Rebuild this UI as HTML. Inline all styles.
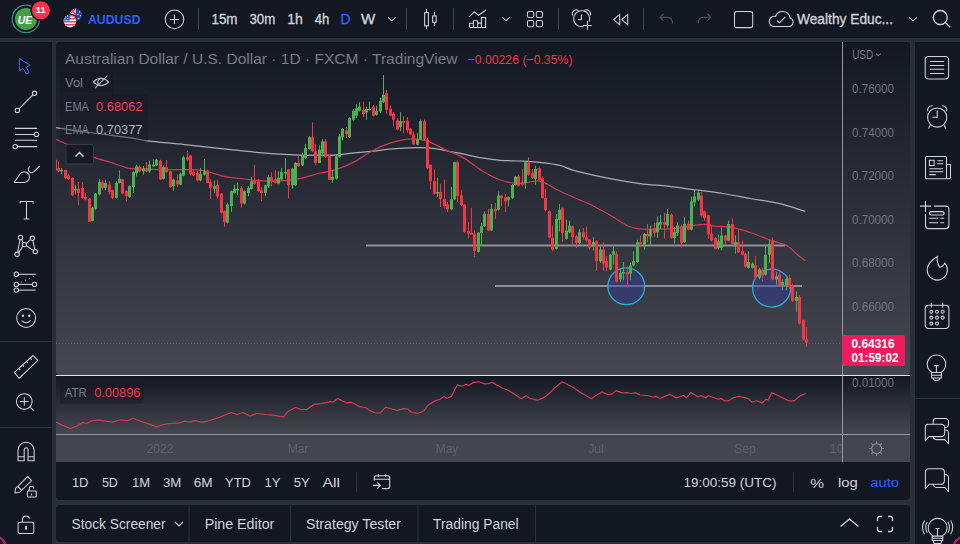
<!DOCTYPE html>
<html><head><meta charset="utf-8"><style>
html,body{margin:0;padding:0;background:#2a2e39;width:960px;height:544px;overflow:hidden}
svg{display:block}
</style></head><body>
<svg width="960" height="544" viewBox="0 0 960 544">
<rect x="0" y="0" width="960" height="544" fill="#2a2e39"/>
<rect x="0" y="0" width="960" height="38" fill="#131722"/>
<rect x="0" y="42" width="52" height="502" fill="#131722"/>
<rect x="915" y="42" width="45" height="502" fill="#131722"/>
<defs>
<linearGradient id="gMain" x1="0" y1="0" x2="0" y2="1"><stop offset="0" stop-color="#131722"/><stop offset="1" stop-color="#454850"/></linearGradient>
<linearGradient id="gAtr" x1="0" y1="0" x2="0" y2="1"><stop offset="0" stop-color="#131722"/><stop offset="1" stop-color="#454850"/></linearGradient>
<clipPath id="cMain"><rect x="56" y="42" width="786" height="333"/></clipPath>
<clipPath id="cAtr"><rect x="56" y="376" width="786" height="58"/></clipPath>
</defs>
<rect x="56" y="42" width="854" height="458" rx="4" fill="#131722"/>
<rect x="56" y="42" width="854" height="333" rx="4" fill="url(#gMain)"/>
<rect x="56" y="50" width="854" height="325" fill="url(#gMain)" opacity="0"/>
<rect x="56" y="376" width="854" height="58" fill="url(#gAtr)"/>
<rect x="56" y="435" width="854" height="27" fill="#43464f"/>
<rect x="56" y="505" width="854" height="37" rx="4" fill="#131722"/>
<g clip-path="url(#cMain)">
<line x1="366" y1="245.5" x2="785" y2="245.5" stroke="#8f929b" stroke-width="1.8"/>
<line x1="495" y1="286" x2="802" y2="286" stroke="#8f929b" stroke-width="1.8"/>
<path d="M56.0 127.5 C62.1 128.4 80.5 131.3 92.8 133.0 C105.0 134.7 120.3 136.3 129.5 137.6 C138.7 138.9 138.7 139.7 147.9 140.9 C157.1 142.1 171.7 143.2 184.7 144.6 C197.7 146.0 213.0 147.8 226.0 149.2 C239.0 150.6 250.6 151.9 262.8 152.9 C275.1 153.9 290.3 154.7 299.5 155.1 C308.7 155.5 311.8 155.1 317.9 155.1 C324.0 155.1 330.2 155.2 336.3 154.8 C342.4 154.4 348.6 153.5 354.7 152.9 C360.8 152.3 366.1 151.8 373.0 151.1 C379.9 150.4 387.0 149.2 396.0 148.7 C405.0 148.1 418.6 147.5 426.8 147.8 C435.0 148.1 439.0 149.4 445.1 150.5 C451.2 151.6 457.4 153.0 463.5 154.2 C469.6 155.4 475.8 156.9 481.9 157.9 C488.0 158.9 494.2 159.8 500.3 160.3 C506.4 160.8 512.6 160.7 518.7 161.0 C524.8 161.3 530.1 161.4 537.0 162.1 C543.9 162.8 553.9 163.9 560.0 165.3 C566.1 166.7 565.1 168.1 573.5 170.3 C581.9 172.5 599.1 176.4 610.2 178.6 C621.3 180.8 630.4 182.3 640.0 183.6 C649.6 184.9 658.4 185.2 667.6 186.2 C676.8 187.2 685.9 188.6 695.1 189.8 C704.3 191.0 713.5 192.1 722.7 193.5 C731.9 194.9 741.1 196.9 750.3 198.5 C759.5 200.1 768.6 200.9 777.8 203.1 C787.0 205.2 800.8 210.0 805.4 211.4" fill="none" stroke="#a9acb5" stroke-width="1.25"/>
<path d="M56.0 139.4 C59.1 140.8 68.3 144.8 74.4 147.7 C80.5 150.6 86.7 154.4 92.8 156.9 C98.9 159.4 105.0 160.5 111.1 162.4 C117.2 164.3 123.4 167.3 129.5 168.4 C135.6 169.5 141.8 169.0 147.9 169.2 C154.0 169.4 160.2 169.6 166.3 169.7 C172.4 169.8 178.6 169.5 184.7 169.7 C190.8 169.8 196.1 169.4 203.0 170.6 C209.9 171.8 219.1 175.5 226.0 176.9 C232.9 178.3 238.3 178.3 244.4 179.0 C250.5 179.7 256.7 180.6 262.8 180.9 C268.9 181.2 275.0 181.3 281.1 180.9 C287.2 180.5 293.4 179.9 299.5 178.7 C305.6 177.5 311.8 175.0 317.9 173.5 C324.0 172.0 330.2 171.5 336.3 169.5 C342.4 167.5 348.6 164.8 354.7 161.6 C360.8 158.4 367.1 153.6 373.0 150.5 C378.9 147.4 384.1 145.1 390.0 143.2 C395.9 141.3 402.3 139.5 408.4 139.1 C414.5 138.7 420.7 139.1 426.8 140.8 C432.9 142.6 439.0 146.8 445.1 149.6 C451.2 152.4 457.4 154.4 463.5 157.9 C469.6 161.4 475.8 167.1 481.9 170.8 C488.0 174.5 494.2 177.9 500.3 180.0 C506.4 182.1 512.6 183.2 518.7 183.4 C524.8 183.6 532.4 180.9 537.0 180.9 C541.6 180.9 543.2 182.3 546.2 183.6 C549.2 184.9 550.6 186.4 555.1 188.7 C559.6 191.0 567.4 194.6 573.5 197.3 C579.6 200.1 585.8 202.2 591.9 205.2 C598.0 208.2 604.1 211.8 610.2 215.3 C616.3 218.8 623.6 224.0 628.6 226.3 C633.6 228.6 635.0 228.4 640.0 228.9 C645.0 229.4 652.3 229.3 658.4 229.2 C664.5 229.1 670.7 229.1 676.8 228.4 C682.9 227.7 690.2 225.8 695.1 225.1 C700.0 224.4 703.1 224.2 706.2 224.4 C709.3 224.6 709.2 225.6 713.5 226.1 C717.8 226.6 725.8 226.2 731.9 227.3 C738.0 228.4 744.2 230.5 750.3 232.5 C756.4 234.5 762.6 237.3 768.7 239.5 C774.8 241.7 782.4 243.3 787.0 245.7 C791.6 248.0 793.1 251.0 796.2 253.6 C799.3 256.1 803.9 259.8 805.4 261.0" fill="none" stroke="#d03a50" stroke-width="1.25"/>
<circle cx="626.3" cy="286.3" r="18.4" fill="rgba(48,62,165,0.42)" stroke="#26aed0" stroke-width="1.3"/>
<circle cx="771.6" cy="288.1" r="19" fill="rgba(48,62,165,0.42)" stroke="#26aed0" stroke-width="1.3"/>
<rect x="55" y="159.0" width="1" height="12.4" fill="#f23645"/>
<rect x="54" y="159.8" width="3" height="10.8" fill="#f23645"/>
<rect x="58" y="161.5" width="1" height="10.7" fill="#f23645"/>
<rect x="57" y="168.1" width="3" height="3.3" fill="#f23645"/>
<rect x="61" y="168.0" width="1" height="5.9" fill="#4caf50"/>
<rect x="60" y="169.8" width="3" height="1.6" fill="#4caf50"/>
<rect x="65" y="169.8" width="1" height="9.0" fill="#f23645"/>
<rect x="64" y="169.8" width="3" height="8.2" fill="#f23645"/>
<rect x="68" y="173.9" width="1" height="5.8" fill="#f23645"/>
<rect x="67" y="175.5" width="3" height="3.3" fill="#f23645"/>
<rect x="72" y="177.2" width="1" height="19.0" fill="#f23645"/>
<rect x="71" y="178.0" width="3" height="17.4" fill="#f23645"/>
<rect x="75" y="184.6" width="1" height="9.9" fill="#4caf50"/>
<rect x="74" y="188.8" width="3" height="1.6" fill="#4caf50"/>
<rect x="78" y="182.0" width="1" height="23.3" fill="#f23645"/>
<rect x="77" y="188.8" width="3" height="4.1" fill="#f23645"/>
<rect x="82" y="182.0" width="1" height="16.7" fill="#f23645"/>
<rect x="81" y="188.0" width="3" height="9.9" fill="#f23645"/>
<rect x="85" y="192.9" width="1" height="7.4" fill="#f23645"/>
<rect x="84" y="197.0" width="3" height="2.5" fill="#f23645"/>
<rect x="89" y="197.9" width="1" height="23.9" fill="#f23645"/>
<rect x="88" y="198.7" width="3" height="23.1" fill="#f23645"/>
<rect x="92" y="207.0" width="1" height="14.3" fill="#4caf50"/>
<rect x="91" y="207.8" width="3" height="13.2" fill="#4caf50"/>
<rect x="95" y="192.9" width="1" height="17.3" fill="#4caf50"/>
<rect x="94" y="193.7" width="3" height="14.9" fill="#4caf50"/>
<rect x="99" y="178.8" width="1" height="16.6" fill="#4caf50"/>
<rect x="98" y="182.1" width="3" height="12.4" fill="#4caf50"/>
<rect x="102" y="179.7" width="1" height="9.9" fill="#f23645"/>
<rect x="101" y="182.1" width="3" height="5.8" fill="#f23645"/>
<rect x="105" y="179.7" width="1" height="10.7" fill="#4caf50"/>
<rect x="104" y="183.0" width="3" height="4.9" fill="#4caf50"/>
<rect x="109" y="181.3" width="1" height="13.2" fill="#f23645"/>
<rect x="108" y="184.6" width="3" height="7.4" fill="#f23645"/>
<rect x="112" y="189.5" width="1" height="9.9" fill="#f23645"/>
<rect x="111" y="190.3" width="3" height="7.5" fill="#f23645"/>
<rect x="116" y="181.2" width="1" height="17.4" fill="#4caf50"/>
<rect x="115" y="182.9" width="3" height="14.9" fill="#4caf50"/>
<rect x="119" y="170.5" width="1" height="13.2" fill="#4caf50"/>
<rect x="118" y="178.8" width="3" height="4.1" fill="#4caf50"/>
<rect x="122" y="178.8" width="1" height="15.7" fill="#f23645"/>
<rect x="121" y="179.3" width="3" height="14.3" fill="#f23645"/>
<rect x="126" y="190.3" width="1" height="11.1" fill="#f23645"/>
<rect x="125" y="191.2" width="3" height="4.9" fill="#f23645"/>
<rect x="129" y="185.4" width="1" height="12.4" fill="#4caf50"/>
<rect x="128" y="186.2" width="3" height="10.7" fill="#4caf50"/>
<rect x="133" y="171.3" width="1" height="21.5" fill="#4caf50"/>
<rect x="132" y="172.1" width="3" height="14.9" fill="#4caf50"/>
<rect x="136" y="164.7" width="1" height="11.6" fill="#4caf50"/>
<rect x="135" y="166.4" width="3" height="6.6" fill="#4caf50"/>
<rect x="139" y="165.5" width="1" height="6.6" fill="#f23645"/>
<rect x="138" y="166.7" width="3" height="4.6" fill="#f23645"/>
<rect x="143" y="166.0" width="1" height="8.6" fill="#4caf50"/>
<rect x="142" y="168.3" width="3" height="3.0" fill="#4caf50"/>
<rect x="146" y="162.2" width="1" height="9.9" fill="#f23645"/>
<rect x="145" y="168.3" width="3" height="3.0" fill="#f23645"/>
<rect x="149" y="160.6" width="1" height="12.0" fill="#4caf50"/>
<rect x="148" y="164.7" width="3" height="6.6" fill="#4caf50"/>
<rect x="153" y="159.4" width="1" height="7.8" fill="#4caf50"/>
<rect x="152" y="164.7" width="3" height="1.7" fill="#4caf50"/>
<rect x="156" y="158.9" width="1" height="7.5" fill="#4caf50"/>
<rect x="155" y="159.8" width="3" height="5.7" fill="#4caf50"/>
<rect x="160" y="159.8" width="1" height="20.6" fill="#f23645"/>
<rect x="159" y="160.6" width="3" height="19.0" fill="#f23645"/>
<rect x="163" y="165.5" width="1" height="14.1" fill="#4caf50"/>
<rect x="162" y="167.2" width="3" height="11.6" fill="#4caf50"/>
<rect x="166" y="160.0" width="1" height="12.6" fill="#f23645"/>
<rect x="165" y="167.2" width="3" height="4.9" fill="#f23645"/>
<rect x="170" y="170.5" width="1" height="17.4" fill="#f23645"/>
<rect x="169" y="171.3" width="3" height="15.7" fill="#f23645"/>
<rect x="173" y="178.8" width="1" height="12.0" fill="#4caf50"/>
<rect x="172" y="179.6" width="3" height="6.6" fill="#4caf50"/>
<rect x="177" y="174.6" width="1" height="12.4" fill="#f23645"/>
<rect x="176" y="180.4" width="3" height="4.1" fill="#f23645"/>
<rect x="180" y="172.6" width="1" height="12.8" fill="#4caf50"/>
<rect x="179" y="173.8" width="3" height="10.7" fill="#4caf50"/>
<rect x="183" y="155.6" width="1" height="20.7" fill="#4caf50"/>
<rect x="182" y="157.3" width="3" height="18.2" fill="#4caf50"/>
<rect x="187" y="150.7" width="1" height="9.9" fill="#f23645"/>
<rect x="186" y="157.3" width="3" height="2.5" fill="#f23645"/>
<rect x="190" y="154.8" width="1" height="20.7" fill="#f23645"/>
<rect x="189" y="155.6" width="3" height="18.2" fill="#f23645"/>
<rect x="193" y="169.7" width="1" height="6.6" fill="#f23645"/>
<rect x="192" y="172.1" width="3" height="3.4" fill="#f23645"/>
<rect x="197" y="170.5" width="1" height="10.7" fill="#f23645"/>
<rect x="196" y="173.0" width="3" height="7.4" fill="#f23645"/>
<rect x="200" y="168.0" width="1" height="13.2" fill="#4caf50"/>
<rect x="199" y="173.8" width="3" height="6.6" fill="#4caf50"/>
<rect x="204" y="158.9" width="1" height="16.6" fill="#4caf50"/>
<rect x="203" y="171.3" width="3" height="3.3" fill="#4caf50"/>
<rect x="207" y="169.7" width="1" height="13.5" fill="#f23645"/>
<rect x="206" y="170.5" width="3" height="12.4" fill="#f23645"/>
<rect x="210" y="179.3" width="1" height="20.1" fill="#f23645"/>
<rect x="209" y="182.1" width="3" height="5.8" fill="#f23645"/>
<rect x="214" y="180.4" width="1" height="12.4" fill="#4caf50"/>
<rect x="213" y="186.2" width="3" height="2.5" fill="#4caf50"/>
<rect x="217" y="179.6" width="1" height="19.0" fill="#f23645"/>
<rect x="216" y="185.0" width="3" height="11.6" fill="#f23645"/>
<rect x="221" y="192.9" width="1" height="20.7" fill="#f23645"/>
<rect x="220" y="193.7" width="3" height="19.0" fill="#f23645"/>
<rect x="224" y="210.2" width="1" height="16.6" fill="#f23645"/>
<rect x="223" y="211.0" width="3" height="10.8" fill="#f23645"/>
<rect x="227" y="202.8" width="1" height="20.7" fill="#4caf50"/>
<rect x="226" y="204.5" width="3" height="18.1" fill="#4caf50"/>
<rect x="231" y="190.4" width="1" height="21.5" fill="#4caf50"/>
<rect x="230" y="191.2" width="3" height="14.9" fill="#4caf50"/>
<rect x="234" y="184.6" width="1" height="9.1" fill="#4caf50"/>
<rect x="233" y="188.8" width="3" height="4.1" fill="#4caf50"/>
<rect x="237" y="182.6" width="1" height="12.8" fill="#4caf50"/>
<rect x="236" y="188.8" width="3" height="1.6" fill="#4caf50"/>
<rect x="241" y="186.3" width="1" height="21.5" fill="#f23645"/>
<rect x="240" y="187.9" width="3" height="15.7" fill="#f23645"/>
<rect x="244" y="190.4" width="1" height="14.1" fill="#4caf50"/>
<rect x="243" y="191.2" width="3" height="12.4" fill="#4caf50"/>
<rect x="248" y="186.3" width="1" height="9.9" fill="#4caf50"/>
<rect x="247" y="187.9" width="3" height="5.0" fill="#4caf50"/>
<rect x="251" y="177.2" width="1" height="12.4" fill="#4caf50"/>
<rect x="250" y="181.3" width="3" height="7.5" fill="#4caf50"/>
<rect x="254" y="164.8" width="1" height="19.8" fill="#f23645"/>
<rect x="253" y="180.5" width="3" height="3.3" fill="#f23645"/>
<rect x="258" y="178.8" width="1" height="13.3" fill="#f23645"/>
<rect x="257" y="181.3" width="3" height="9.9" fill="#f23645"/>
<rect x="261" y="187.1" width="1" height="14.1" fill="#f23645"/>
<rect x="260" y="190.4" width="3" height="2.5" fill="#f23645"/>
<rect x="265" y="184.6" width="1" height="11.6" fill="#4caf50"/>
<rect x="264" y="185.5" width="3" height="7.4" fill="#4caf50"/>
<rect x="268" y="174.7" width="1" height="13.3" fill="#4caf50"/>
<rect x="267" y="177.2" width="3" height="9.1" fill="#4caf50"/>
<rect x="271" y="172.2" width="1" height="14.1" fill="#f23645"/>
<rect x="270" y="177.2" width="3" height="4.1" fill="#f23645"/>
<rect x="275" y="170.3" width="1" height="13.3" fill="#f23645"/>
<rect x="274" y="179.4" width="3" height="3.3" fill="#f23645"/>
<rect x="278" y="171.2" width="1" height="13.2" fill="#4caf50"/>
<rect x="277" y="177.8" width="3" height="5.8" fill="#4caf50"/>
<rect x="281" y="167.9" width="1" height="13.1" fill="#4caf50"/>
<rect x="280" y="172.0" width="3" height="7.4" fill="#4caf50"/>
<rect x="285" y="158.0" width="1" height="20.6" fill="#4caf50"/>
<rect x="284" y="172.0" width="3" height="1.6" fill="#4caf50"/>
<rect x="288" y="168.7" width="1" height="29.7" fill="#f23645"/>
<rect x="287" y="169.5" width="3" height="15.7" fill="#f23645"/>
<rect x="292" y="167.9" width="1" height="20.6" fill="#4caf50"/>
<rect x="291" y="168.7" width="3" height="16.5" fill="#4caf50"/>
<rect x="295" y="162.0" width="1" height="24.0" fill="#4caf50"/>
<rect x="294" y="162.9" width="3" height="22.3" fill="#4caf50"/>
<rect x="298" y="155.5" width="1" height="11.5" fill="#f23645"/>
<rect x="297" y="162.9" width="3" height="3.3" fill="#f23645"/>
<rect x="302" y="152.6" width="1" height="13.6" fill="#4caf50"/>
<rect x="301" y="155.5" width="3" height="9.9" fill="#4caf50"/>
<rect x="305" y="143.9" width="1" height="14.9" fill="#4caf50"/>
<rect x="304" y="148.0" width="3" height="9.9" fill="#4caf50"/>
<rect x="309" y="136.4" width="1" height="13.3" fill="#4caf50"/>
<rect x="308" y="137.3" width="3" height="11.5" fill="#4caf50"/>
<rect x="312" y="122.4" width="1" height="29.7" fill="#f23645"/>
<rect x="311" y="137.3" width="3" height="14.0" fill="#f23645"/>
<rect x="315" y="143.9" width="1" height="21.5" fill="#f23645"/>
<rect x="314" y="151.3" width="3" height="11.6" fill="#f23645"/>
<rect x="319" y="145.5" width="1" height="17.7" fill="#4caf50"/>
<rect x="318" y="149.7" width="3" height="13.2" fill="#4caf50"/>
<rect x="322" y="138.9" width="1" height="17.4" fill="#4caf50"/>
<rect x="321" y="141.4" width="3" height="11.9" fill="#4caf50"/>
<rect x="325" y="138.9" width="1" height="19.1" fill="#f23645"/>
<rect x="324" y="141.4" width="3" height="15.7" fill="#f23645"/>
<rect x="329" y="155.0" width="1" height="25.0" fill="#f23645"/>
<rect x="328" y="156.4" width="3" height="23.4" fill="#f23645"/>
<rect x="332" y="170.0" width="1" height="12.7" fill="#4caf50"/>
<rect x="331" y="177.0" width="3" height="2.8" fill="#4caf50"/>
<rect x="336" y="155.0" width="1" height="24.8" fill="#4caf50"/>
<rect x="335" y="156.4" width="3" height="22.2" fill="#4caf50"/>
<rect x="339" y="133.9" width="1" height="23.9" fill="#4caf50"/>
<rect x="338" y="136.3" width="3" height="20.7" fill="#4caf50"/>
<rect x="342" y="128.0" width="1" height="12.5" fill="#4caf50"/>
<rect x="341" y="128.9" width="3" height="8.3" fill="#4caf50"/>
<rect x="346" y="127.2" width="1" height="10.8" fill="#f23645"/>
<rect x="345" y="130.5" width="3" height="3.4" fill="#f23645"/>
<rect x="349" y="117.3" width="1" height="20.7" fill="#4caf50"/>
<rect x="348" y="118.1" width="3" height="19.1" fill="#4caf50"/>
<rect x="353" y="109.0" width="1" height="11.6" fill="#4caf50"/>
<rect x="352" y="110.7" width="3" height="9.1" fill="#4caf50"/>
<rect x="356" y="104.1" width="1" height="14.0" fill="#4caf50"/>
<rect x="355" y="108.2" width="3" height="7.5" fill="#4caf50"/>
<rect x="359" y="102.4" width="1" height="9.1" fill="#4caf50"/>
<rect x="358" y="106.6" width="3" height="4.1" fill="#4caf50"/>
<rect x="363" y="101.6" width="1" height="15.7" fill="#f23645"/>
<rect x="362" y="109.9" width="3" height="4.1" fill="#f23645"/>
<rect x="366" y="106.6" width="1" height="13.2" fill="#4caf50"/>
<rect x="365" y="109.0" width="3" height="3.4" fill="#4caf50"/>
<rect x="369" y="101.6" width="1" height="9.1" fill="#4caf50"/>
<rect x="368" y="109.0" width="3" height="1.2" fill="#4caf50"/>
<rect x="373" y="104.9" width="1" height="11.6" fill="#f23645"/>
<rect x="372" y="106.6" width="3" height="9.1" fill="#f23645"/>
<rect x="376" y="105.8" width="1" height="9.9" fill="#4caf50"/>
<rect x="375" y="110.7" width="3" height="4.1" fill="#4caf50"/>
<rect x="380" y="97.5" width="1" height="15.7" fill="#4caf50"/>
<rect x="379" y="100.8" width="3" height="10.7" fill="#4caf50"/>
<rect x="383" y="75.0" width="1" height="28.0" fill="#4caf50"/>
<rect x="382" y="94.8" width="3" height="7.4" fill="#4caf50"/>
<rect x="386" y="89.8" width="1" height="24.0" fill="#f23645"/>
<rect x="385" y="93.1" width="3" height="16.6" fill="#f23645"/>
<rect x="390" y="105.5" width="1" height="10.8" fill="#f23645"/>
<rect x="389" y="108.8" width="3" height="6.7" fill="#f23645"/>
<rect x="393" y="112.1" width="1" height="14.1" fill="#f23645"/>
<rect x="392" y="113.8" width="3" height="5.8" fill="#f23645"/>
<rect x="397" y="117.9" width="1" height="12.4" fill="#f23645"/>
<rect x="396" y="120.4" width="3" height="9.1" fill="#f23645"/>
<rect x="400" y="112.1" width="1" height="19.1" fill="#4caf50"/>
<rect x="399" y="121.2" width="3" height="5.8" fill="#4caf50"/>
<rect x="403" y="116.3" width="1" height="17.3" fill="#f23645"/>
<rect x="402" y="121.2" width="3" height="1.7" fill="#f23645"/>
<rect x="407" y="117.1" width="1" height="15.7" fill="#f23645"/>
<rect x="406" y="120.4" width="3" height="9.9" fill="#f23645"/>
<rect x="410" y="127.9" width="1" height="7.4" fill="#f23645"/>
<rect x="409" y="128.7" width="3" height="5.8" fill="#f23645"/>
<rect x="413" y="131.2" width="1" height="13.5" fill="#f23645"/>
<rect x="412" y="134.5" width="3" height="9.9" fill="#f23645"/>
<rect x="417" y="132.8" width="1" height="12.4" fill="#4caf50"/>
<rect x="416" y="139.4" width="3" height="5.3" fill="#4caf50"/>
<rect x="420" y="119.6" width="1" height="20.6" fill="#4caf50"/>
<rect x="419" y="121.2" width="3" height="18.2" fill="#4caf50"/>
<rect x="424" y="119.6" width="1" height="20.6" fill="#f23645"/>
<rect x="423" y="121.2" width="3" height="18.2" fill="#f23645"/>
<rect x="427" y="137.4" width="1" height="31.4" fill="#f23645"/>
<rect x="426" y="139.4" width="3" height="28.6" fill="#f23645"/>
<rect x="430" y="164.7" width="1" height="24.8" fill="#f23645"/>
<rect x="429" y="164.7" width="3" height="16.5" fill="#f23645"/>
<rect x="434" y="169.7" width="1" height="24.8" fill="#f23645"/>
<rect x="433" y="181.2" width="3" height="12.4" fill="#f23645"/>
<rect x="437" y="177.9" width="1" height="19.0" fill="#4caf50"/>
<rect x="436" y="192.0" width="3" height="1.6" fill="#4caf50"/>
<rect x="440" y="183.7" width="1" height="23.2" fill="#f23645"/>
<rect x="439" y="192.0" width="3" height="7.4" fill="#f23645"/>
<rect x="444" y="179.6" width="1" height="28.9" fill="#f23645"/>
<rect x="443" y="199.4" width="3" height="6.6" fill="#f23645"/>
<rect x="447" y="201.9" width="1" height="9.9" fill="#f23645"/>
<rect x="446" y="204.4" width="3" height="4.9" fill="#f23645"/>
<rect x="451" y="187.0" width="1" height="23.2" fill="#4caf50"/>
<rect x="450" y="199.4" width="3" height="9.9" fill="#4caf50"/>
<rect x="454" y="161.4" width="1" height="38.8" fill="#4caf50"/>
<rect x="453" y="162.2" width="3" height="37.2" fill="#4caf50"/>
<rect x="457" y="160.6" width="1" height="41.3" fill="#f23645"/>
<rect x="456" y="162.2" width="3" height="33.9" fill="#f23645"/>
<rect x="461" y="189.8" width="1" height="16.6" fill="#f23645"/>
<rect x="460" y="195.5" width="3" height="9.5" fill="#f23645"/>
<rect x="464" y="203.9" width="1" height="28.9" fill="#f23645"/>
<rect x="463" y="204.7" width="3" height="27.3" fill="#f23645"/>
<rect x="468" y="222.0" width="1" height="16.6" fill="#f23645"/>
<rect x="467" y="231.2" width="3" height="2.4" fill="#f23645"/>
<rect x="471" y="208.0" width="1" height="26.5" fill="#f23645"/>
<rect x="470" y="232.8" width="3" height="1.7" fill="#f23645"/>
<rect x="474" y="230.3" width="1" height="26.5" fill="#f23645"/>
<rect x="473" y="233.6" width="3" height="17.4" fill="#f23645"/>
<rect x="478" y="232.0" width="1" height="20.6" fill="#4caf50"/>
<rect x="477" y="232.8" width="3" height="19.0" fill="#4caf50"/>
<rect x="481" y="222.9" width="1" height="23.1" fill="#4caf50"/>
<rect x="480" y="226.2" width="3" height="6.6" fill="#4caf50"/>
<rect x="484" y="211.3" width="1" height="15.7" fill="#4caf50"/>
<rect x="483" y="213.8" width="3" height="12.4" fill="#4caf50"/>
<rect x="488" y="208.8" width="1" height="22.4" fill="#f23645"/>
<rect x="487" y="213.8" width="3" height="16.5" fill="#f23645"/>
<rect x="491" y="203.9" width="1" height="27.3" fill="#4caf50"/>
<rect x="490" y="208.8" width="3" height="21.5" fill="#4caf50"/>
<rect x="495" y="203.0" width="1" height="15.8" fill="#f23645"/>
<rect x="494" y="208.8" width="3" height="2.5" fill="#f23645"/>
<rect x="498" y="191.5" width="1" height="19.0" fill="#4caf50"/>
<rect x="497" y="195.6" width="3" height="14.1" fill="#4caf50"/>
<rect x="501" y="194.8" width="1" height="11.6" fill="#f23645"/>
<rect x="500" y="195.6" width="3" height="2.5" fill="#f23645"/>
<rect x="505" y="194.0" width="1" height="18.1" fill="#f23645"/>
<rect x="504" y="197.3" width="3" height="4.1" fill="#f23645"/>
<rect x="508" y="196.4" width="1" height="10.0" fill="#4caf50"/>
<rect x="507" y="197.3" width="3" height="2.5" fill="#4caf50"/>
<rect x="512" y="184.0" width="1" height="14.9" fill="#4caf50"/>
<rect x="511" y="184.9" width="3" height="13.2" fill="#4caf50"/>
<rect x="515" y="175.8" width="1" height="9.9" fill="#4caf50"/>
<rect x="514" y="176.6" width="3" height="8.3" fill="#4caf50"/>
<rect x="518" y="174.8" width="1" height="11.6" fill="#f23645"/>
<rect x="517" y="176.4" width="3" height="9.1" fill="#f23645"/>
<rect x="522" y="169.0" width="1" height="17.4" fill="#f23645"/>
<rect x="521" y="182.2" width="3" height="2.5" fill="#f23645"/>
<rect x="525" y="161.6" width="1" height="27.2" fill="#4caf50"/>
<rect x="524" y="162.4" width="3" height="20.6" fill="#4caf50"/>
<rect x="528" y="157.4" width="1" height="18.2" fill="#f23645"/>
<rect x="527" y="162.4" width="3" height="12.4" fill="#f23645"/>
<rect x="532" y="169.0" width="1" height="9.9" fill="#f23645"/>
<rect x="531" y="173.1" width="3" height="5.0" fill="#f23645"/>
<rect x="535" y="165.7" width="1" height="19.0" fill="#4caf50"/>
<rect x="534" y="169.0" width="3" height="9.9" fill="#4caf50"/>
<rect x="539" y="167.4" width="1" height="13.2" fill="#f23645"/>
<rect x="538" y="168.2" width="3" height="11.6" fill="#f23645"/>
<rect x="542" y="176.4" width="1" height="22.4" fill="#f23645"/>
<rect x="541" y="178.1" width="3" height="19.8" fill="#f23645"/>
<rect x="545" y="188.8" width="1" height="22.4" fill="#f23645"/>
<rect x="544" y="197.9" width="3" height="12.4" fill="#f23645"/>
<rect x="549" y="210.3" width="1" height="28.1" fill="#f23645"/>
<rect x="548" y="211.2" width="3" height="26.4" fill="#f23645"/>
<rect x="552" y="225.6" width="1" height="25.6" fill="#f23645"/>
<rect x="551" y="238.0" width="3" height="11.6" fill="#f23645"/>
<rect x="556" y="214.0" width="1" height="35.6" fill="#4caf50"/>
<rect x="555" y="219.0" width="3" height="29.8" fill="#4caf50"/>
<rect x="559" y="204.0" width="1" height="27.4" fill="#4caf50"/>
<rect x="558" y="209.9" width="3" height="9.9" fill="#4caf50"/>
<rect x="562" y="207.4" width="1" height="34.6" fill="#f23645"/>
<rect x="561" y="208.3" width="3" height="24.7" fill="#f23645"/>
<rect x="566" y="219.8" width="1" height="19.9" fill="#4caf50"/>
<rect x="565" y="230.6" width="3" height="8.2" fill="#4caf50"/>
<rect x="569" y="220.7" width="1" height="12.3" fill="#4caf50"/>
<rect x="568" y="225.6" width="3" height="6.6" fill="#4caf50"/>
<rect x="572" y="225.6" width="1" height="19.0" fill="#f23645"/>
<rect x="571" y="226.4" width="3" height="10.8" fill="#f23645"/>
<rect x="576" y="234.7" width="1" height="13.3" fill="#f23645"/>
<rect x="575" y="236.4" width="3" height="6.6" fill="#f23645"/>
<rect x="579" y="228.9" width="1" height="14.9" fill="#4caf50"/>
<rect x="578" y="232.2" width="3" height="10.8" fill="#4caf50"/>
<rect x="583" y="228.0" width="1" height="11.7" fill="#f23645"/>
<rect x="582" y="232.2" width="3" height="5.0" fill="#f23645"/>
<rect x="586" y="226.4" width="1" height="15.7" fill="#f23645"/>
<rect x="585" y="237.2" width="3" height="3.3" fill="#f23645"/>
<rect x="589" y="238.8" width="1" height="10.8" fill="#f23645"/>
<rect x="588" y="239.7" width="3" height="8.2" fill="#f23645"/>
<rect x="593" y="237.2" width="1" height="13.2" fill="#4caf50"/>
<rect x="592" y="242.1" width="3" height="4.2" fill="#4caf50"/>
<rect x="596" y="240.5" width="1" height="30.5" fill="#f23645"/>
<rect x="595" y="241.3" width="3" height="19.9" fill="#f23645"/>
<rect x="600" y="244.6" width="1" height="18.2" fill="#4caf50"/>
<rect x="599" y="249.6" width="3" height="11.6" fill="#4caf50"/>
<rect x="603" y="242.1" width="1" height="28.9" fill="#f23645"/>
<rect x="602" y="249.6" width="3" height="13.9" fill="#f23645"/>
<rect x="606" y="256.2" width="1" height="15.0" fill="#f23645"/>
<rect x="605" y="261.0" width="3" height="6.5" fill="#f23645"/>
<rect x="610" y="253.8" width="1" height="16.5" fill="#4caf50"/>
<rect x="609" y="254.6" width="3" height="14.9" fill="#4caf50"/>
<rect x="613" y="247.2" width="1" height="17.3" fill="#4caf50"/>
<rect x="612" y="251.3" width="3" height="3.3" fill="#4caf50"/>
<rect x="616" y="251.3" width="1" height="31.2" fill="#f23645"/>
<rect x="615" y="253.8" width="3" height="27.7" fill="#f23645"/>
<rect x="620" y="267.9" width="1" height="14.0" fill="#4caf50"/>
<rect x="619" y="272.8" width="3" height="6.6" fill="#4caf50"/>
<rect x="623" y="262.0" width="1" height="18.2" fill="#4caf50"/>
<rect x="622" y="272.0" width="3" height="1.6" fill="#4caf50"/>
<rect x="627" y="266.2" width="1" height="21.5" fill="#f23645"/>
<rect x="626" y="272.0" width="3" height="2.5" fill="#f23645"/>
<rect x="630" y="262.9" width="1" height="17.3" fill="#4caf50"/>
<rect x="629" y="265.4" width="3" height="8.2" fill="#4caf50"/>
<rect x="633" y="251.3" width="1" height="14.9" fill="#4caf50"/>
<rect x="632" y="261.2" width="3" height="4.2" fill="#4caf50"/>
<rect x="637" y="239.8" width="1" height="23.1" fill="#4caf50"/>
<rect x="636" y="242.2" width="3" height="19.8" fill="#4caf50"/>
<rect x="640" y="235.6" width="1" height="11.6" fill="#f23645"/>
<rect x="639" y="242.2" width="3" height="3.3" fill="#f23645"/>
<rect x="644" y="233.1" width="1" height="16.6" fill="#4caf50"/>
<rect x="643" y="234.0" width="3" height="10.7" fill="#4caf50"/>
<rect x="647" y="224.0" width="1" height="18.2" fill="#f23645"/>
<rect x="646" y="234.0" width="3" height="2.4" fill="#f23645"/>
<rect x="650" y="225.7" width="1" height="19.0" fill="#4caf50"/>
<rect x="649" y="229.8" width="3" height="6.6" fill="#4caf50"/>
<rect x="654" y="223.2" width="1" height="14.1" fill="#f23645"/>
<rect x="653" y="228.2" width="3" height="4.9" fill="#f23645"/>
<rect x="657" y="216.6" width="1" height="21.5" fill="#4caf50"/>
<rect x="656" y="222.4" width="3" height="9.9" fill="#4caf50"/>
<rect x="660" y="215.5" width="1" height="13.3" fill="#4caf50"/>
<rect x="659" y="222.1" width="3" height="2.5" fill="#4caf50"/>
<rect x="664" y="213.0" width="1" height="25.7" fill="#f23645"/>
<rect x="663" y="222.1" width="3" height="2.5" fill="#f23645"/>
<rect x="667" y="208.9" width="1" height="19.0" fill="#4caf50"/>
<rect x="666" y="213.9" width="3" height="11.6" fill="#4caf50"/>
<rect x="671" y="213.0" width="1" height="25.7" fill="#f23645"/>
<rect x="670" y="214.7" width="3" height="23.2" fill="#f23645"/>
<rect x="674" y="227.1" width="1" height="16.5" fill="#4caf50"/>
<rect x="673" y="232.1" width="3" height="5.8" fill="#4caf50"/>
<rect x="677" y="222.1" width="1" height="14.1" fill="#4caf50"/>
<rect x="676" y="225.5" width="3" height="7.4" fill="#4caf50"/>
<rect x="681" y="224.6" width="1" height="23.2" fill="#f23645"/>
<rect x="680" y="226.3" width="3" height="16.5" fill="#f23645"/>
<rect x="684" y="217.2" width="1" height="25.6" fill="#4caf50"/>
<rect x="683" y="223.8" width="3" height="18.2" fill="#4caf50"/>
<rect x="688" y="220.5" width="1" height="9.9" fill="#f23645"/>
<rect x="687" y="223.8" width="3" height="5.8" fill="#f23645"/>
<rect x="691" y="196.5" width="1" height="33.9" fill="#4caf50"/>
<rect x="690" y="201.5" width="3" height="28.1" fill="#4caf50"/>
<rect x="694" y="189.9" width="1" height="16.5" fill="#4caf50"/>
<rect x="693" y="196.5" width="3" height="5.8" fill="#4caf50"/>
<rect x="698" y="191.6" width="1" height="9.1" fill="#4caf50"/>
<rect x="697" y="192.4" width="3" height="7.4" fill="#4caf50"/>
<rect x="701" y="191.6" width="1" height="24.8" fill="#f23645"/>
<rect x="700" y="195.7" width="3" height="19.8" fill="#f23645"/>
<rect x="704" y="210.6" width="1" height="9.9" fill="#f23645"/>
<rect x="703" y="211.4" width="3" height="6.6" fill="#f23645"/>
<rect x="708" y="214.7" width="1" height="24.0" fill="#f23645"/>
<rect x="707" y="215.5" width="3" height="19.0" fill="#f23645"/>
<rect x="711" y="224.8" width="1" height="16.5" fill="#f23645"/>
<rect x="710" y="233.9" width="3" height="6.6" fill="#f23645"/>
<rect x="715" y="237.2" width="1" height="12.4" fill="#f23645"/>
<rect x="714" y="238.0" width="3" height="10.8" fill="#f23645"/>
<rect x="718" y="234.7" width="1" height="14.9" fill="#4caf50"/>
<rect x="717" y="241.3" width="3" height="6.6" fill="#4caf50"/>
<rect x="721" y="227.3" width="1" height="23.1" fill="#4caf50"/>
<rect x="720" y="235.5" width="3" height="12.4" fill="#4caf50"/>
<rect x="725" y="234.7" width="1" height="9.9" fill="#f23645"/>
<rect x="724" y="235.5" width="3" height="5.0" fill="#f23645"/>
<rect x="728" y="220.7" width="1" height="20.6" fill="#4caf50"/>
<rect x="727" y="224.0" width="3" height="16.5" fill="#4caf50"/>
<rect x="732" y="218.2" width="1" height="26.4" fill="#f23645"/>
<rect x="731" y="224.0" width="3" height="19.8" fill="#f23645"/>
<rect x="735" y="235.5" width="1" height="18.2" fill="#4caf50"/>
<rect x="734" y="242.1" width="3" height="4.2" fill="#4caf50"/>
<rect x="738" y="229.8" width="1" height="23.1" fill="#f23645"/>
<rect x="737" y="242.1" width="3" height="10.0" fill="#f23645"/>
<rect x="742" y="240.5" width="1" height="14.9" fill="#f23645"/>
<rect x="741" y="251.2" width="3" height="3.3" fill="#f23645"/>
<rect x="745" y="252.9" width="1" height="14.9" fill="#f23645"/>
<rect x="744" y="253.7" width="3" height="13.2" fill="#f23645"/>
<rect x="748" y="251.2" width="1" height="17.4" fill="#4caf50"/>
<rect x="747" y="262.0" width="3" height="5.8" fill="#4caf50"/>
<rect x="752" y="262.0" width="1" height="6.6" fill="#4caf50"/>
<rect x="751" y="263.6" width="3" height="4.2" fill="#4caf50"/>
<rect x="755" y="256.2" width="1" height="23.1" fill="#f23645"/>
<rect x="754" y="265.3" width="3" height="12.4" fill="#f23645"/>
<rect x="759" y="267.8" width="1" height="11.5" fill="#4caf50"/>
<rect x="758" y="269.4" width="3" height="8.3" fill="#4caf50"/>
<rect x="762" y="268.0" width="1" height="13.2" fill="#f23645"/>
<rect x="761" y="269.7" width="3" height="5.8" fill="#f23645"/>
<rect x="765" y="245.7" width="1" height="29.8" fill="#4caf50"/>
<rect x="764" y="254.8" width="3" height="19.8" fill="#4caf50"/>
<rect x="769" y="239.9" width="1" height="23.1" fill="#4caf50"/>
<rect x="768" y="244.0" width="3" height="10.8" fill="#4caf50"/>
<rect x="772" y="237.4" width="1" height="43.0" fill="#f23645"/>
<rect x="771" y="240.7" width="3" height="38.9" fill="#f23645"/>
<rect x="776" y="272.1" width="1" height="12.4" fill="#4caf50"/>
<rect x="775" y="276.3" width="3" height="3.3" fill="#4caf50"/>
<rect x="779" y="270.5" width="1" height="15.7" fill="#f23645"/>
<rect x="778" y="274.6" width="3" height="10.8" fill="#f23645"/>
<rect x="782" y="279.6" width="1" height="10.7" fill="#4caf50"/>
<rect x="781" y="282.0" width="3" height="3.4" fill="#4caf50"/>
<rect x="786" y="277.1" width="1" height="13.2" fill="#4caf50"/>
<rect x="785" y="278.8" width="3" height="6.6" fill="#4caf50"/>
<rect x="789" y="274.6" width="1" height="14.1" fill="#f23645"/>
<rect x="788" y="277.9" width="3" height="9.1" fill="#f23645"/>
<rect x="792" y="283.7" width="1" height="18.2" fill="#f23645"/>
<rect x="791" y="285.4" width="3" height="15.7" fill="#f23645"/>
<rect x="796" y="291.2" width="1" height="20.6" fill="#4caf50"/>
<rect x="795" y="296.9" width="3" height="4.2" fill="#4caf50"/>
<rect x="799" y="295.0" width="1" height="29.5" fill="#f23645"/>
<rect x="798" y="296.9" width="3" height="26.7" fill="#f23645"/>
<rect x="803" y="319.5" width="1" height="21.5" fill="#f23645"/>
<rect x="802" y="320.3" width="3" height="19.0" fill="#f23645"/>
<rect x="806" y="327.0" width="1" height="19.8" fill="#f23645"/>
<rect x="805" y="339.3" width="3" height="3.4" fill="#f23645"/>
<line x1="56" y1="343.5" x2="842" y2="343.5" stroke="#e0306a" stroke-width="1" stroke-dasharray="1 2" opacity="0.7"/>
</g>
<rect x="60" y="72" width="53" height="21" fill="rgba(19,23,34,0.35)"/>
<rect x="60" y="94" width="88" height="47" fill="rgba(19,23,34,0.35)"/>
<text x="65" y="63.8" font-family="Liberation Sans, sans-serif" font-size="15" font-weight="normal" fill="#787b86" textLength="392.5" lengthAdjust="spacingAndGlyphs">Australian Dollar / U.S. Dollar · 1D · FXCM · TradingView</text>
<text x="467.5" y="63.8" font-family="Liberation Sans, sans-serif" font-size="13.5" font-weight="normal" fill="#f23645" textLength="105" lengthAdjust="spacingAndGlyphs">−0.00226 (−0.35%)</text>
<text x="65" y="86.6" font-family="Liberation Sans, sans-serif" font-size="12.5" font-weight="normal" fill="#787b86" textLength="18" lengthAdjust="spacingAndGlyphs">Vol</text>
<g fill="none" stroke="#b2b5be" stroke-width="1.1"><path d="M93.3 82 Q101 74.8 108.7 82 Q101 89.2 93.3 82Z"/><path d="M99 84.5 A2.8 2.8 0 0 1 103.5 79.5"/><line x1="95.2" y1="88.2" x2="107.4" y2="75.6"/></g>
<text x="65" y="110.8" font-family="Liberation Sans, sans-serif" font-size="12.5" font-weight="normal" fill="#787b86" textLength="24" lengthAdjust="spacingAndGlyphs">EMA</text>
<text x="96" y="110.8" font-family="Liberation Sans, sans-serif" font-size="13" font-weight="normal" fill="#e8445a" textLength="46.5" lengthAdjust="spacingAndGlyphs">0.68062</text>
<text x="65" y="134.4" font-family="Liberation Sans, sans-serif" font-size="12.5" font-weight="normal" fill="#787b86" textLength="24" lengthAdjust="spacingAndGlyphs">EMA</text>
<text x="96" y="134.4" font-family="Liberation Sans, sans-serif" font-size="13" font-weight="normal" fill="#b2b5be" textLength="46.5" lengthAdjust="spacingAndGlyphs">0.70377</text>
<rect x="66" y="144.5" width="27.5" height="19.5" rx="2" fill="rgba(19,23,34,0.85)" stroke="#363a45" stroke-width="1"/>
<path d="M75.5 156.5 L79.5 152.5 L83.5 156.5" fill="none" stroke="#d1d4dc" stroke-width="1.5"/>
<line x1="842.5" y1="42" x2="842.5" y2="462" stroke="#9598a1" stroke-width="1"/>
<text x="852.2" y="58.9" font-family="Liberation Sans, sans-serif" font-size="12" font-weight="normal" fill="#787b86" textLength="21" lengthAdjust="spacingAndGlyphs">USD</text>
<path d="M876 53.6 L878.4 55.6 L880.8 53.6" fill="none" stroke="#787b86" stroke-width="1.1"/>
<text x="852" y="93.0" font-family="Liberation Sans, sans-serif" font-size="12" font-weight="normal" fill="#6f727d" textLength="42" lengthAdjust="spacingAndGlyphs">0.76000</text>
<text x="852" y="136.6" font-family="Liberation Sans, sans-serif" font-size="12" font-weight="normal" fill="#6f727d" textLength="42" lengthAdjust="spacingAndGlyphs">0.74000</text>
<text x="852" y="180.2" font-family="Liberation Sans, sans-serif" font-size="12" font-weight="normal" fill="#6f727d" textLength="42" lengthAdjust="spacingAndGlyphs">0.72000</text>
<text x="852" y="223.8" font-family="Liberation Sans, sans-serif" font-size="12" font-weight="normal" fill="#6f727d" textLength="42" lengthAdjust="spacingAndGlyphs">0.70000</text>
<text x="852" y="267.4" font-family="Liberation Sans, sans-serif" font-size="12" font-weight="normal" fill="#6f727d" textLength="42" lengthAdjust="spacingAndGlyphs">0.68000</text>
<text x="852" y="311.0" font-family="Liberation Sans, sans-serif" font-size="12" font-weight="normal" fill="#6f727d" textLength="42" lengthAdjust="spacingAndGlyphs">0.66000</text>
<rect x="842" y="335" width="63" height="31" rx="2" fill="#ee1c5e"/>
<text x="851.5" y="347.8" font-family="Liberation Sans, sans-serif" font-size="12.5" font-weight="bold" fill="#ffffff" textLength="43" lengthAdjust="spacingAndGlyphs">0.64316</text>
<text x="851.5" y="361.6" font-family="Liberation Sans, sans-serif" font-size="12.5" font-weight="bold" fill="#ffffff" textLength="47" lengthAdjust="spacingAndGlyphs">01:59:02</text>
<rect x="56" y="375" width="854" height="1" fill="#e0e3eb"/>
<rect x="60" y="383" width="83.5" height="20.6" fill="rgba(19,23,34,0.4)"/>
<text x="64.7" y="396.8" font-family="Liberation Sans, sans-serif" font-size="12.5" font-weight="normal" fill="#787b86" textLength="22" lengthAdjust="spacingAndGlyphs">ATR</text>
<text x="94.2" y="396.8" font-family="Liberation Sans, sans-serif" font-size="13" font-weight="normal" fill="#f23645" textLength="46.3" lengthAdjust="spacingAndGlyphs">0.00896</text>
<g clip-path="url(#cAtr)"><polyline points="56.0,422.1 61.8,425.0 70.6,428.5 76.4,426.2 82.2,422.7 86.6,423.5 91.0,421.2 98.3,419.8 105.6,421.2 112.9,422.1 120.2,419.8 127.5,420.6 133.3,418.3 140.6,421.2 149.3,424.1 156.6,427.0 161.0,425.0 169.7,423.5 178.5,423.2 184.3,421.2 190.2,422.1 194.5,420.6 201.8,422.1 207.7,421.2 215.0,418.9 222.2,416.2 231.0,412.5 236.8,414.5 242.7,412.5 250.0,416.0 257.2,413.3 266.0,414.5 274.7,415.4 283.5,416.8 287.9,411.6 295.2,407.5 301.0,409.5 306.8,409.5 314.1,404.3 321.4,403.7 330.4,401.7 333.3,402.0 337.7,398.5 342.0,400.8 346.4,402.8 350.8,402.2 355.2,404.3 359.5,406.6 365.4,407.5 369.7,410.4 375.6,413.0 380.0,413.0 385.8,407.2 391.6,409.0 397.5,410.4 403.3,408.7 407.7,409.0 412.0,412.5 417.9,413.3 423.7,411.0 428.1,405.2 433.9,401.4 439.7,399.3 444.1,396.4 447.0,398.5 451.4,396.4 457.3,384.7 461.6,386.2 466.0,384.2 468.9,385.3 473.3,382.4 479.1,381.8 485.0,383.9 489.3,383.3 492.2,382.4 498.1,385.6 502.5,388.3 506.8,389.7 512.7,392.9 518.5,397.0 521.4,398.7 525.8,395.8 530.2,398.5 537.5,400.2 543.3,397.9 549.1,393.5 555.0,387.7 562.2,381.8 568.1,384.7 573.9,387.7 579.7,392.0 585.6,395.5 591.4,398.7 596.0,395.5 601.8,392.0 607.7,394.4 612.0,394.1 615.8,390.6 622.2,392.9 626.6,392.6 631.0,393.5 635.4,392.6 639.8,395.0 647.0,395.5 652.9,397.0 655.8,396.4 660.2,398.5 664.5,396.4 670.4,394.4 676.2,397.9 683.5,395.5 686.4,397.9 690.8,392.6 695.2,395.0 698.1,397.0 701.0,395.5 705.4,397.9 708.3,395.8 712.7,397.3 718.5,399.3 721.4,398.5 724.3,400.8 728.7,400.8 733.1,397.9 738.9,396.4 746.2,397.9 749.1,399.3 752.0,402.2 756.4,400.8 762.3,403.1 765.8,399.3 768.1,399.9 771.9,392.6 776.8,395.0 782.7,397.9 788.5,400.8 794.3,400.8 800.2,395.8 806.0,393.5" fill="none" stroke="#d23a50" stroke-width="1.2" stroke-linejoin="round"/></g>
<text x="852" y="387.3" font-family="Liberation Sans, sans-serif" font-size="12" font-weight="normal" fill="#6f727d" textLength="42" lengthAdjust="spacingAndGlyphs">0.01000</text>
<rect x="56" y="434" width="854" height="1" fill="#9598a1"/>
<text x="160" y="452.8" font-family="Liberation Sans, sans-serif" font-size="12" font-weight="normal" fill="#5d606b" text-anchor="middle">2022</text>
<text x="298" y="452.8" font-family="Liberation Sans, sans-serif" font-size="12" font-weight="normal" fill="#5d606b" text-anchor="middle">Mar</text>
<text x="447" y="452.8" font-family="Liberation Sans, sans-serif" font-size="12" font-weight="normal" fill="#5d606b" text-anchor="middle">May</text>
<text x="596" y="452.8" font-family="Liberation Sans, sans-serif" font-size="12" font-weight="normal" fill="#5d606b" text-anchor="middle">Jul</text>
<text x="745" y="452.8" font-family="Liberation Sans, sans-serif" font-size="12" font-weight="normal" fill="#5d606b" text-anchor="middle">Sep</text>
<text x="830" y="452.8" font-family="Liberation Sans, sans-serif" font-size="12" font-weight="normal" fill="#5d606b">10</text>
<rect x="842" y="435" width="1" height="27" fill="#9598a1"/>
<g fill="none" stroke="#8a8d96" stroke-width="1.1"><circle cx="876.6" cy="448.6" r="4.9"/><line x1="881.60" y1="448.60" x2="884.00" y2="448.60"/><line x1="880.13" y1="452.14" x2="881.83" y2="453.83"/><line x1="876.60" y1="453.60" x2="876.60" y2="456.00"/><line x1="873.07" y1="452.14" x2="871.37" y2="453.83"/><line x1="871.60" y1="448.60" x2="869.20" y2="448.60"/><line x1="873.07" y1="445.06" x2="871.37" y2="443.37"/><line x1="876.60" y1="443.60" x2="876.60" y2="441.20"/><line x1="880.13" y1="445.06" x2="881.83" y2="443.37"/></g>
<text x="71.9" y="487" font-family="Liberation Sans, sans-serif" font-size="13.5" font-weight="normal" fill="#d1d4dc" textLength="16.6" lengthAdjust="spacingAndGlyphs">1D</text>
<text x="101.9" y="487" font-family="Liberation Sans, sans-serif" font-size="13.5" font-weight="normal" fill="#d1d4dc" textLength="15.9" lengthAdjust="spacingAndGlyphs">5D</text>
<text x="131.89999999999998" y="487" font-family="Liberation Sans, sans-serif" font-size="13.5" font-weight="normal" fill="#d1d4dc" textLength="18.2" lengthAdjust="spacingAndGlyphs">1M</text>
<text x="163.0" y="487" font-family="Liberation Sans, sans-serif" font-size="13.5" font-weight="normal" fill="#d1d4dc" textLength="18.4" lengthAdjust="spacingAndGlyphs">3M</text>
<text x="193.7" y="487" font-family="Liberation Sans, sans-serif" font-size="13.5" font-weight="normal" fill="#d1d4dc" textLength="18.9" lengthAdjust="spacingAndGlyphs">6M</text>
<text x="225.0" y="487" font-family="Liberation Sans, sans-serif" font-size="13.5" font-weight="normal" fill="#d1d4dc" textLength="25.9" lengthAdjust="spacingAndGlyphs">YTD</text>
<text x="264.59999999999997" y="487" font-family="Liberation Sans, sans-serif" font-size="13.5" font-weight="normal" fill="#d1d4dc" textLength="16.0" lengthAdjust="spacingAndGlyphs">1Y</text>
<text x="293.7" y="487" font-family="Liberation Sans, sans-serif" font-size="13.5" font-weight="normal" fill="#d1d4dc" textLength="16.0" lengthAdjust="spacingAndGlyphs">5Y</text>
<text x="322.4" y="487" font-family="Liberation Sans, sans-serif" font-size="13.5" font-weight="normal" fill="#d1d4dc" textLength="17.5" lengthAdjust="spacingAndGlyphs">All</text>
<rect x="356" y="472" width="1" height="20" fill="#2a2e39"/>
<g fill="none" stroke="#d1d4dc" stroke-width="1.1"><path d="M374.3 480.6 V477.7 A2 2 0 0 1 376.3 475.7 H387.7 A2 2 0 0 1 389.7 477.7 V486.6 A2 2 0 0 1 387.7 488.6 H382"/><path d="M374.3 479.2 H389.7 M378.4 474.3 V476.8 M385.6 474.3 V476.8"/><path d="M372.9 485.4 H380.4 M377.2 482.3 L380.4 485.4 L377.2 488.6"/></g>
<text x="683.5" y="487" font-family="Liberation Sans, sans-serif" font-size="13.5" font-weight="normal" fill="#d1d4dc" textLength="93" lengthAdjust="spacingAndGlyphs">19:00:59 (UTC)</text>
<rect x="793" y="472" width="1" height="20" fill="#2a2e39"/>
<text x="810.2" y="487.5" font-family="Liberation Sans, sans-serif" font-size="13.5" font-weight="normal" fill="#d1d4dc" textLength="13.8" lengthAdjust="spacingAndGlyphs">%</text>
<text x="837.9" y="487" font-family="Liberation Sans, sans-serif" font-size="13.5" font-weight="normal" fill="#d1d4dc" textLength="19.8" lengthAdjust="spacingAndGlyphs">log</text>
<text x="870.3" y="487" font-family="Liberation Sans, sans-serif" font-size="13.5" font-weight="normal" fill="#2962ff" textLength="28.8" lengthAdjust="spacingAndGlyphs">auto</text>
<text x="71.5" y="529" font-family="Liberation Sans, sans-serif" font-size="14" font-weight="normal" fill="#d1d4dc" textLength="94.1" lengthAdjust="spacingAndGlyphs">Stock Screener</text>
<text x="204.7" y="529" font-family="Liberation Sans, sans-serif" font-size="14" font-weight="normal" fill="#d1d4dc" textLength="69.6" lengthAdjust="spacingAndGlyphs">Pine Editor</text>
<text x="306.0" y="529" font-family="Liberation Sans, sans-serif" font-size="14" font-weight="normal" fill="#d1d4dc" textLength="94.9" lengthAdjust="spacingAndGlyphs">Strategy Tester</text>
<text x="433.1" y="529" font-family="Liberation Sans, sans-serif" font-size="14" font-weight="normal" fill="#d1d4dc" textLength="85.5" lengthAdjust="spacingAndGlyphs">Trading Panel</text>
<path d="M175 522 L179 526 L183 522" fill="none" stroke="#d1d4dc" stroke-width="1.1"/>
<rect x="188.5" y="505" width="1" height="37" fill="#2a2e39"/>
<rect x="290" y="505" width="1" height="37" fill="#2a2e39"/>
<rect x="417.5" y="505" width="1" height="37" fill="#2a2e39"/>
<rect x="535" y="505" width="1" height="37" fill="#2a2e39"/>
<path d="M840.5 526.5 L849.5 519 L858.5 526.5" fill="none" stroke="#d1d4dc" stroke-width="1.3"/>
<g fill="none" stroke="#d1d4dc" stroke-width="1.3"><path d="M877.5 521 V518.5 Q877.5 516.5 879.5 516.5 H882"/><path d="M888 516.5 H890.5 Q892.5 516.5 892.5 518.5 V521"/><path d="M892.5 527 V529.5 Q892.5 531.5 890.5 531.5 H888"/><path d="M882 531.5 H879.5 Q877.5 531.5 877.5 529.5 V527"/></g>
<!-- top toolbar -->
<g>
<circle cx="25.9" cy="18.9" r="13.7" fill="none" stroke="#2a9283" stroke-width="1.3"/>
<circle cx="26" cy="18.9" r="11" fill="#43a047"/>
<text x="17.8" y="23.6" font-family="Liberation Sans, sans-serif" font-size="10.5" font-weight="bold" font-style="italic" fill="#ffffff" textLength="14.5" lengthAdjust="spacingAndGlyphs">UE</text>
<circle cx="40.9" cy="10.3" r="10.6" fill="#131722"/>
<circle cx="40.9" cy="10.3" r="9" fill="#f23645"/>
<text x="35.8" y="13.2" font-family="Liberation Sans, sans-serif" font-size="9.8" font-weight="bold" fill="#ffffff" textLength="10" lengthAdjust="spacingAndGlyphs">11</text>
</g>
<!-- flags -->
<g>
<clipPath id="cAus"><circle cx="76" cy="14.8" r="6.2"/></clipPath>
<g clip-path="url(#cAus)"><rect x="69" y="8" width="14" height="14" fill="#1f3f9a"/>
<rect x="69" y="8" width="7" height="6.5" fill="#e8b8c8"/><path d="M69 8 L76 14.5 M76 8 L69 14.5" stroke="#e23a58" stroke-width="1.05"/>
<circle cx="79.5" cy="12" r="0.7" fill="#fff"/><circle cx="78" cy="14.5" r="0.7" fill="#fff"/><circle cx="80.5" cy="15.5" r="0.7" fill="#fff"/><circle cx="78.5" cy="18.5" r="0.8" fill="#fff"/></g>
<circle cx="70" cy="21" r="7.2" fill="#131722"/>
<clipPath id="cUs"><circle cx="70" cy="21" r="6.3"/></clipPath>
<g clip-path="url(#cUs)"><rect x="63" y="14" width="14" height="14" fill="#f4f4f4"/>
<rect x="63" y="15" width="14" height="1.5" fill="#e0445a"/><rect x="63" y="18" width="14" height="1.5" fill="#e0445a"/><rect x="63" y="21" width="14" height="1.5" fill="#e0445a"/><rect x="63" y="24" width="14" height="1.5" fill="#e0445a"/><rect x="63" y="27" width="14" height="1.5" fill="#e0445a"/>
<rect x="63" y="14" width="7" height="6.5" fill="#3a62c8"/><circle cx="65" cy="16" r="0.5" fill="#fff"/><circle cx="67.5" cy="16" r="0.5" fill="#fff"/><circle cx="65" cy="18.5" r="0.5" fill="#fff"/><circle cx="67.5" cy="18.5" r="0.5" fill="#fff"/></g>
</g>
<text x="88" y="23.6" font-family="Liberation Sans, sans-serif" font-size="13.5" font-weight="bold" fill="#2962ff" textLength="52.5" lengthAdjust="spacingAndGlyphs">AUDUSD</text>
<g fill="none" stroke="#d1d4dc" stroke-width="1.05">
<circle cx="174.5" cy="19.4" r="9.3"/>
<path d="M169.9 19.4 H179.1 M174.5 14.8 V24"/>
</g>
<rect x="198" y="8" width="1" height="22" fill="#434651"/>
<g font-family="Liberation Sans, sans-serif" font-size="13.8" font-weight="normal" fill="#d1d4dc" stroke="#d1d4dc" stroke-width="0.3">
<text x="211.5" y="23.9" textLength="26" lengthAdjust="spacingAndGlyphs">15m</text><text x="249.5" y="23.9" textLength="25.8" lengthAdjust="spacingAndGlyphs">30m</text><text x="287.3" y="23.9" textLength="15.6" lengthAdjust="spacingAndGlyphs">1h</text><text x="314.8" y="23.9" textLength="14.6" lengthAdjust="spacingAndGlyphs">4h</text>
<text x="340.5" y="23.9" fill="#2962ff" stroke="#2962ff" stroke-width="0.3" textLength="10" lengthAdjust="spacingAndGlyphs">D</text><text x="361" y="23.9" textLength="14.3" lengthAdjust="spacingAndGlyphs">W</text>
</g>
<path d="M388 17.3 L391.8 20.8 L395.6 17.3" fill="none" stroke="#d1d4dc" stroke-width="1.05"/>
<rect x="406" y="8" width="1" height="22" fill="#434651"/>
<g fill="none" stroke="#d1d4dc" stroke-width="1.05">
<rect x="424.6" y="12.6" width="3.8" height="13.2"/><path d="M426.5 9 V12.6 M426.5 25.8 V29"/>
<rect x="432.6" y="16" width="3.6" height="6.2"/><path d="M434.4 12 V16 M434.4 22.2 V26"/>
</g>
<rect x="453" y="8" width="1" height="22" fill="#434651"/>
<g fill="none" stroke="#d1d4dc" stroke-width="1.05">
<path d="M469 17 L474.3 11.8 L478.5 15.3 L486 10"/>
<path d="M469.6 27.5 V23.3 H473.4 V27.5 M473.4 27.5 V20.8 H477.6 V27.5 M477.6 27.5 V23.1 H481.4 V27.5 M481.4 27.5 V17.4 H485.6 V27.5 H469.6"/>
</g>
<path d="M502.3 17.3 L506 20.6 L509.7 17.3" fill="none" stroke="#d1d4dc" stroke-width="1.05"/>
<g fill="none" stroke="#d1d4dc" stroke-width="1.05">
<rect x="527.5" y="11.4" width="6.2" height="6.2" rx="1.5"/><rect x="536.3" y="11.4" width="6.2" height="6.2" rx="1.5"/>
<rect x="527.5" y="20.5" width="6.2" height="6.2" rx="1.5"/><rect x="536.3" y="20.5" width="6.2" height="6.2" rx="1.5"/>
</g>
<rect x="558" y="8" width="1" height="22" fill="#434651"/>
<g fill="none" stroke="#d1d4dc" stroke-width="1.05">
<path d="M583.5 26.5 A8 8 0 1 1 589.2 21.5"/>
<path d="M572.6 15.5 A4 4 0 0 1 578.5 10.6"/><path d="M590.2 15.5 A4 4 0 0 0 584.3 10.6"/>
<path d="M581.4 14.4 V19.4 H578"/>
<path d="M583 25.5 H591.8 M587.4 21 V29.8"/>
</g>
<g fill="none" stroke="#d1d4dc" stroke-width="1.05" stroke-linejoin="miter">
<path d="M619.7 14.4 L613.6 19.6 L619.7 24.8 Z"/><path d="M627.7 14.4 L621.8 19.6 L627.7 24.8 Z"/>
</g>
<rect x="643" y="8" width="1" height="22" fill="#434651"/>
<g fill="none" stroke="#50535e" stroke-width="1.05">
<path d="M663.3 13.8 L660 17.2 L663.3 20.6 M660 17.2 H667 Q672.5 17.2 672.5 23.6"/>
<path d="M707.4 13.8 L710.7 17.2 L707.4 20.6 M710.7 17.2 H703.7 Q698.2 17.2 698.2 23.6"/>
</g>
<rect x="734.5" y="11.4" width="18.2" height="16.2" rx="2.2" fill="none" stroke="#d1d4dc" stroke-width="1.05"/>
<g fill="none" stroke="#d1d4dc" stroke-width="1.05">
<path d="M773 26.4 H789 A4.3 4.3 0 0 0 790 18 A7.5 7.5 0 0 0 775.5 16.5 A5 5 0 0 0 773 26.4 Z"/>
<path d="M777 20.6 L779.4 22.8 L785.3 16.9"/>
</g>
<text x="797" y="23.5" font-family="Liberation Sans, sans-serif" font-size="13.8" font-weight="normal" fill="#d1d4dc" stroke="#d1d4dc" stroke-width="0.3" textLength="96" lengthAdjust="spacingAndGlyphs">Wealthy Educ...</text>
<path d="M909 17.3 L913 20.8 L917 17.3" fill="none" stroke="#d1d4dc" stroke-width="1.05"/>
<g fill="none" stroke="#d1d4dc" stroke-width="1.3"><circle cx="940.3" cy="17.5" r="7"/><path d="M945.4 22.6 L950.3 27.2"/></g>

<!-- left toolbar -->
<g fill="none" stroke="#d1d4dc" stroke-width="1.05">
<path d="M19.3 58.5 L19.5 70.7 L23.1 68.3 L26.2 73.9 L29.2 72.8 L26.5 67.4 L29.8 65 Z" stroke="#3d62f5" stroke-width="1" stroke-linejoin="round"/>
<circle cx="17.4" cy="110.4" r="2.2"/><circle cx="34.5" cy="93.3" r="2.2"/><path d="M19 108.8 L32.9 94.9"/>
<path d="M15 128.4 H37 M15 134.4 H34.3 M15 140.3 H37 M17.3 146.6 H37"/><circle cx="36.5" cy="134.4" r="2.2"/><circle cx="15.2" cy="146.6" r="2.2"/>
<path d="M14.3 182.4 L19.8 174.2 A5.3 5.3 0 1 1 24.2 182.4 Z" stroke-linejoin="round"/>
<path d="M29.8 166.4 Q27 169.5 29.5 171.8 Q31.8 173.8 34 171.5 L39.5 166.2"/>
<path d="M20.1 203.5 V201.5 H33 V203.5 M26.5 201.5 V219 M23.8 219 H29.3"/>
<circle cx="20.5" cy="237.5" r="2.2"/><circle cx="32.4" cy="238.3" r="2.2"/><circle cx="24.4" cy="244.6" r="2.2"/><circle cx="17.1" cy="254.3" r="2.2"/><circle cx="35.3" cy="251.6" r="2.2"/>
<path d="M20 239.6 L17.6 252.1 M21.7 239.3 L23 242.8 M26.4 243.6 L30.5 239.5 M32.8 240.5 L34.8 249.4 M26.4 245.8 L33.3 250.4 M18.6 252.6 L22.9 246.3"/>
<circle cx="16.3" cy="274.3" r="2.2"/><path d="M18.5 274.3 H35.7"/>
<circle cx="16.3" cy="284.4" r="2.2"/><circle cx="34.5" cy="284.4" r="2.2"/><path d="M18.5 284.4 H32.3"/>
<circle cx="16.3" cy="290.1" r="2.2"/><path d="M18.5 290.1 H35.7"/>
</g>
<g fill="#d1d4dc"><circle cx="21.5" cy="282" r="0.6"/><circle cx="25.4" cy="280" r="0.6"/><circle cx="29.6" cy="278.4" r="0.6"/><circle cx="33.6" cy="276.4" r="0.6"/></g>
<g fill="none" stroke="#d1d4dc" stroke-width="1.05">
<circle cx="26.15" cy="318" r="9.5"/><path d="M21.7 320.6 Q26.1 325 30.6 320.6"/>
</g>
<g fill="#d1d4dc"><circle cx="22.9" cy="315.8" r="1.2"/><circle cx="29.2" cy="315.8" r="1.2"/></g>
<rect x="0" y="341" width="52" height="1" fill="#2a2e39"/>
<g fill="none" stroke="#d1d4dc" stroke-width="1.05" stroke-linejoin="round">
<path d="M14.4 372.4 L19.1 378.3 L37.8 360.3 L33 355.5 Z"/>
<path d="M18.6 368.3 L20.3 370.2 M22.4 364.8 L24.1 366.7 M26.2 361.3 L27.9 363.2 M30 357.8 L31.7 359.7"/>
<circle cx="24.3" cy="401.5" r="7.8"/><path d="M20 401.5 H28.6 M24.3 397.2 V405.8 M29.9 407.2 L34.2 410.8"/>
</g>
<rect x="0" y="427" width="52" height="1" fill="#2a2e39"/>
<g fill="none" stroke="#d1d4dc" stroke-width="1.05">
<path d="M18 460.8 V450.3 A8 8 0 0 1 34.1 450.3 V460.8 H28 V449.6 A1.9 1.9 0 0 0 24.2 449.6 V460.8 Z M18 456.8 H24.2 M28 456.8 H34.1"/>
<path d="M15.6 488.5 L27.7 476.6 L31.6 480.6 L19.6 492.3 L15 492.9 Z M17.7 486.5 L21.7 490.4"/>
<rect x="27.3" y="491" width="9" height="6" rx="1"/><path d="M29.2 491 V488.5 A2.3 2.3 0 0 1 33.8 488.5"/>
<rect x="18.1" y="522.2" width="15.7" height="11.3" rx="1.8"/><path d="M22.5 522.2 V518.8 A3.6 3.6 0 0 1 29.5 518.6"/>
</g>
<rect x="31.1" y="493.5" width="1" height="2" fill="#d1d4dc"/>
<rect x="25" y="525.9" width="2" height="3.8" rx="0.6" fill="#d1d4dc"/>

<!-- right toolbar -->
<g fill="none" stroke="#d1d4dc" stroke-width="1.05">
<rect x="925.2" y="56.4" width="23.4" height="22.6" rx="3.5"/>
<path d="M929.9 61.4 H944.1 M929.9 65.4 H944.1 M929.9 69.3 H944.1 M929.9 73.4 H944.1"/>
<circle cx="937.2" cy="117.5" r="9.6"/>
<path d="M927.8 111.4 A4.3 4.3 0 0 1 932.5 105.8 M946.6 111.4 A4.3 4.3 0 0 0 941.9 105.8"/>
<path d="M937.2 110.5 V117.3 H932.4 M930.5 124.8 L928.6 128.5 M943.9 124.8 L945.8 128.5"/>
<rect x="925.5" y="156.4" width="21" height="22.4" rx="1"/><path d="M946.5 164.5 H950.5 V177.8 A1 1 0 0 1 949.5 178.8 H946.5"/>
<rect x="929.4" y="160.3" width="4.8" height="5.2"/>
<path d="M937.3 160.8 H942.9 M937.3 163.8 H942.9 M929.4 168.7 H942.9 M929.4 171.7 H942.9 M929.4 174.6 H935.8"/>
<path d="M920 206.1 H931 M925.5 200.9 V212 M934 206.1 H945.9 A3 3 0 0 1 948.9 209.1 V225.6 A3 3 0 0 1 945.9 228.6 H928.5 A3 3 0 0 1 925.5 225.6 V214"/>
<rect x="929.4" y="211.6" width="14.7" height="3.3" rx="1.65"/>
<path d="M929.4 218.3 H938 M940.3 218.3 H944.1 M929.4 222.7 H938 M940.3 222.7 H944.1"/>
<path d="M937.4 256.5 Q927.2 262.5 927.2 270 A10.1 10.1 0 0 0 947.4 270 Q947.4 265.8 944.6 263.2 Q943.5 266.7 939.6 267.2 Q936.4 262.5 937.4 256.5 Z"/>
<rect x="925.2" y="305.3" width="23.7" height="23.3" rx="3.5"/>
<path d="M931.3 302.8 V307.8 M942.7 302.8 V307.8"/>
<circle cx="931.3" cy="311.7" r="1.5"/><circle cx="937" cy="311.7" r="1.5"/><circle cx="942.7" cy="311.7" r="1.5"/>
<circle cx="931.3" cy="317.6" r="1.5"/><circle cx="937" cy="317.6" r="1.5"/><circle cx="942.7" cy="317.6" r="1.5"/>
<circle cx="931.3" cy="323.5" r="1.5"/><circle cx="937" cy="323.5" r="1.5"/>
<path d="M932.2 372.4 A9.2 9.2 0 1 1 940.8 372.4 M931.6 372.4 H941.4 V378 H931.6 Z M931.6 375.2 H941.4 M933.5 378 V379 Q933.5 380.3 935 380.3 H938 Q939.5 380.3 939.5 379 V378 M934.2 365.6 H938.6 M936.4 365.6 V372.4"/>
</g>
<rect x="914" y="398" width="46" height="1" fill="#2a2e39"/>
<g fill="none" stroke="#d1d4dc" stroke-width="1.05" stroke-linejoin="round">
<path d="M925.3 441 V427.3 A3 3 0 0 1 928.3 424.3 H941.7 A3 3 0 0 1 944.7 427.3 V433.6 A3 3 0 0 1 941.7 436.6 H928.8 Z"/>
<path d="M933.2 424.3 V421.4 A3 3 0 0 1 936.2 418.4 H945.5 A3 3 0 0 1 948.5 421.4 V424.5 A3 3 0 0 1 945.5 427.5 H944.7"/>
<path d="M944.7 429.9 H945.5 A3 3 0 0 1 948.5 432.9 V443.7 L944.7 439.6 H936.2 A3 3 0 0 1 933.2 436.6"/>
<path d="M925.4 489 V472.2 A3.5 3.5 0 0 1 928.9 468.7 H940.9 A3.5 3.5 0 0 1 944.4 472.2 V480.8 A3.5 3.5 0 0 1 940.9 484.3 H929.1 Z"/>
<path d="M944.4 474.6 H945.5 A3 3 0 0 1 948.5 477.6 V491.6 L945 487.5 H936.2 A3 3 0 0 1 933.4 484.3"/>
<path d="M933.1 536 A9.4 9.4 0 1 1 942.2 536 M932.2 536.1 H942.8 V540.4 H932.2 Z M932.2 538.2 H942.8 M935.5 528.5 H939.5 M937.5 528.5 V536 M933.5 540.4 V542 Q933.5 543.5 935 543.5 H940 Q941.5 543.5 941.5 542 V540.4"/>
<path d="M924.6 520.5 Q920.3 527.3 924.6 534.2 M927.2 522 Q924.2 527.3 927.2 532.8 M950.6 520.5 Q954.9 527.3 950.6 534.2 M948 522 Q951 527.3 948 532.8"/>
</g>
<!-- pink corners -->
<path d="M0 537.5 Q3.5 540 5.5 544" fill="none" stroke="#c8207a" stroke-width="2.5" opacity="0.85"/>
<path d="M960 537.5 Q956 540 954 544" fill="none" stroke="#c8207a" stroke-width="2.5" opacity="0.85"/>

</svg>
</body></html>
